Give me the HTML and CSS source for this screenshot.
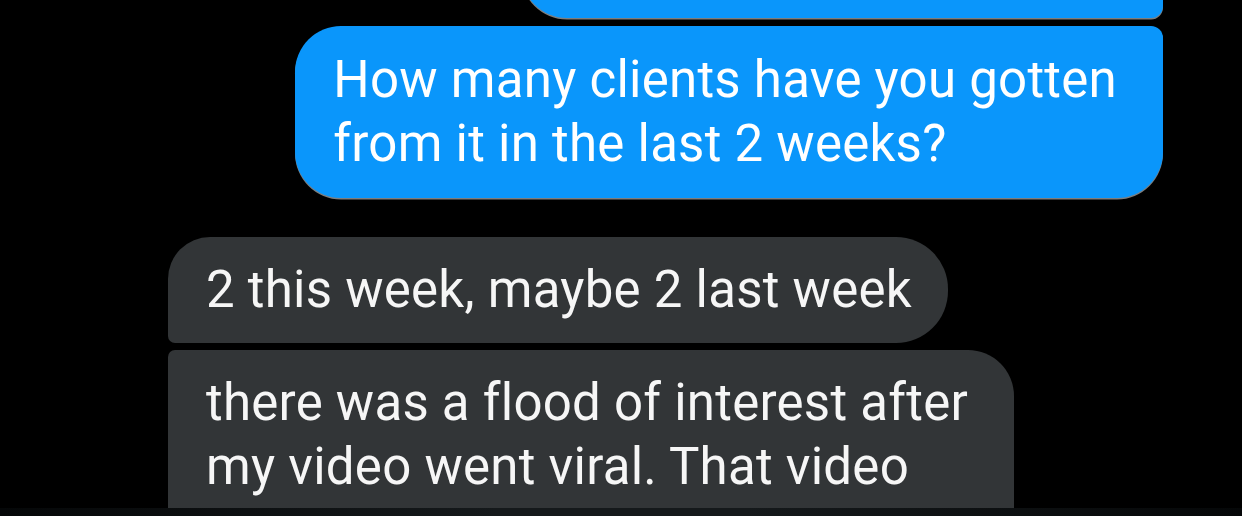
FILE: index.html
```html
<!DOCTYPE html>
<html lang="en">
<head>
    <meta charset="UTF-8">
    <title>Messages</title>
    <link rel="stylesheet" href="styles.css">
</head>
<body>

    <!-- Conversation -->
    <div class="thread">
        <div class="group sent">
            <div class="bubble blue cut-off"></div>
            <div class="bubble blue last">How many clients have you gotten<br>from it in the last 2 weeks?</div>
        </div>

        <div class="group received">
            <div class="bubble grey first">2 this week, maybe 2 last week</div>
            <div class="bubble grey next">there was a flood of interest after<br>my video went viral. That video</div>
        </div>
    </div>

    <!-- bottom toolbar fade -->
    <div class="toolbar-fade"></div>

</body>
</html>
```

FILE: styles.css
```css
body {
    margin: 0;
    padding: 0;
    background-color: #000;
    font-family: Roboto, "Noto Sans", sans-serif;
    height: 516px;
    overflow: hidden;
    position: relative;
}

.thread {
    display: flex;
    flex-direction: column;
    gap: 39px;
}

.group {
    display: flex;
    flex-direction: column;
}

/* Sent messages */
.sent {
    align-items: flex-end;
    padding-right: 79px;
    gap: 8px;
}

/* Received messages */
.received {
    align-items: flex-start;
    padding-left: 168px;
    gap: 7px;
}

.bubble {
    font-size: 51px;
    line-height: 64px;
    letter-spacing: 0.25px;
    color: #fff;
    padding: 22px 46px 22px 38px;
    white-space: nowrap;
}

.blue {
    background-color: #0a96fb;
    box-shadow: 0 1.5px 0 rgba(140, 140, 140, 0.9);
}

.cut-off {
    width: 558px;
    height: 64px;
    margin-top: -90px;
    border-radius: 0 0 12px 46px;
}

.last {
    border-radius: 46px 12px 46px 46px;
}

.grey {
    background-color: #323537;
    color: #f6f6f6;
    padding: 21px 36px 21px 38px;
}

.first {
    border-radius: 42px 52px 52px 7px;
}

.next {
    border-radius: 7px 46px 0 0;
    padding-right: 46px;
    padding-bottom: 60px;
}

.toolbar-fade {
    position: absolute;
    left: 0;
    right: 0;
    bottom: 0;
    height: 8px;
    background: linear-gradient(to right, #050708, #15191b 40%, #15191b 60%, #050708);
}
```
